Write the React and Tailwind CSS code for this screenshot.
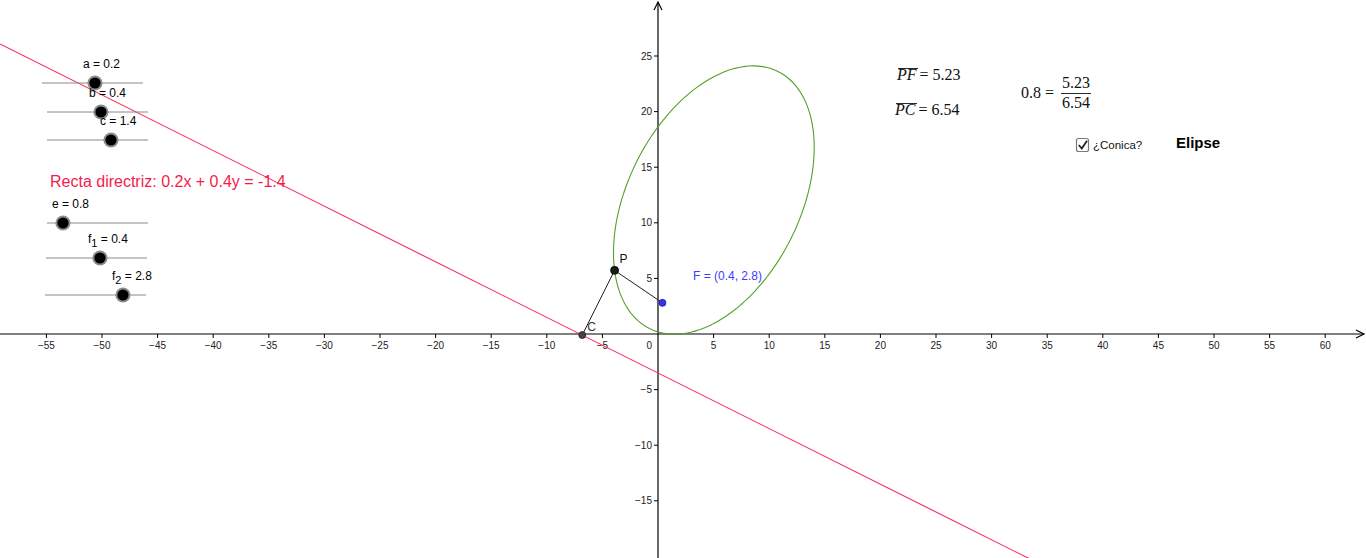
const S = 11.12;
const OX = 658;
const OY = 334;
const px = (x) => OX + x * S;
const py = (y) => OY - y * S;

// conica: foco F, directriz 0.2x + 0.4y + 1.4 = 0, excentricidad e
const e = 0.8;
const F = [0.4, 2.8];
const nLen = Math.sqrt(0.2 * 0.2 + 0.4 * 0.4);
const nHat = [0.2 / nLen, 0.4 / nLen];
const d0 = (0.2 * F[0] + 0.4 * F[1] + 1.4) / nLen;

function conicPoint(t) {
  const u = [Math.cos(t), Math.sin(t)];
  const r = (e * d0) / (1 - e * (u[0] * nHat[0] + u[1] * nHat[1]));
  return [F[0] + r * u[0], F[1] + r * u[1]];
}

function ellipsePath() {
  let d = "";
  for (let i = 0; i <= 360; i++) {
    const [x, y] = conicPoint((i / 360) * Math.PI * 2);
    d += (i === 0 ? "M" : "L") + px(x).toFixed(2) + " " + py(y).toFixed(2) + " ";
  }
  return d + "Z";
}

// P sobre la conica, C pie de la perpendicular en la directriz
const P = conicPoint(Math.atan2(2.96, -4.36));
const k = (0.2 * P[0] + 0.4 * P[1] + 1.4) / (0.2 * 0.2 + 0.4 * 0.4);
const C = [P[0] - k * 0.2, P[1] - k * 0.4];

const xTicks = [];
for (let v = -55; v <= 60; v += 5) if (v !== 0) xTicks.push(v);
const yTicks = [];
for (let v = -15; v <= 25; v += 5) if (v !== 0) yTicks.push(v);

const fmt = (v) => (v < 0 ? "\u2212" + Math.abs(v) : String(v));

const sliders = [
  { label: "a", sub: null, val: "0.2", lx: 83, ly: 68, x1: 42, y: 83, knob: 95 },
  { label: "b", sub: null, val: "0.4", lx: 89, ly: 97, x1: 47, y: 112, knob: 101 },
  { label: "c", sub: null, val: "1.4", lx: 100, ly: 125, x1: 47, y: 140, knob: 111 },
  { label: "e", sub: null, val: "0.8", lx: 52, ly: 208, x1: 47, y: 223, knob: 63 },
  { label: "f", sub: "1", val: "0.4", lx: 88, ly: 243, x1: 46, y: 258, knob: 100 },
  { label: "f", sub: "2", val: "2.8", lx: 112, ly: 280, x1: 45, y: 295, knob: 123 },
];

function Slider({ s }) {
  return (
    <g>
      <line x1={s.x1} y1={s.y} x2={s.x1 + 101} y2={s.y} stroke="#8a8a8a" strokeWidth="1" />
      <circle cx={s.knob} cy={s.y} r="7.6" fill="#8c8c8c" />
      <circle cx={s.knob} cy={s.y} r="5.6" fill="#000" />
      <text x={s.lx} y={s.ly} fontSize="12" fill="#000">
        {s.label}
        {s.sub && (
          <tspan dy="4" fontSize="11">
            {s.sub}
          </tspan>
        )}
        <tspan dy={s.sub ? -4 : 0}>{" = " + s.val}</tspan>
      </text>
    </g>
  );
}

export default function App() {
  return (
    <div className="w-full h-[558px] bg-white overflow-hidden">
      <svg
        width="1366"
        height="558"
        viewBox="0 0 1366 558"
        className="block font-['Liberation_Sans',Arial,sans-serif]"
      >
        {/* ejes */}
        <line x1="0" y1={OY} x2="1364" y2={OY} stroke="#000" strokeWidth="1.2" />
        <path d={`M1356 ${OY - 4} L1364 ${OY} L1356 ${OY + 4}`} fill="none" stroke="#000" strokeWidth="1.2" />
        <line x1={OX} y1="2" x2={OX} y2="558" stroke="#000" strokeWidth="1.2" />
        <path d={`M${OX - 4} 10 L${OX} 2 L${OX + 4} 10`} fill="none" stroke="#000" strokeWidth="1.2" />

        {xTicks.map((v) => (
          <g key={"x" + v}>
            <line x1={px(v)} y1={OY} x2={px(v)} y2={OY + 4} stroke="#000" strokeWidth="1" />
            <text x={px(v)} y={OY + 15} fontSize="10" textAnchor="middle" fill="#222">
              {fmt(v)}
            </text>
          </g>
        ))}
        {yTicks.map((v) => (
          <g key={"y" + v}>
            <line x1={OX - 4} y1={py(v)} x2={OX} y2={py(v)} stroke="#000" strokeWidth="1" />
            <text x={OX - 6} y={py(v) + 3.5} fontSize="10" textAnchor="end" fill="#222">
              {fmt(v)}
            </text>
          </g>
        ))}
        <text x={OX - 6} y={OY + 15} fontSize="10" textAnchor="end" fill="#222">
          0
        </text>

        {/* directriz */}
        <line x1="0" y1="44" x2="1040" y2="564" stroke="#ff2452" strokeWidth="1.1" />

        {/* conica */}
        <path d={ellipsePath()} fill="none" stroke="#55a02a" strokeWidth="1.1" />

        {/* segmentos */}
        <line x1={px(P[0])} y1={py(P[1])} x2={px(F[0])} y2={py(F[1])} stroke="#222" strokeWidth="1" />
        <line x1={px(P[0])} y1={py(P[1])} x2={px(C[0])} y2={py(C[1])} stroke="#222" strokeWidth="1" />

        {/* puntos */}
        <circle cx={px(C[0])} cy={py(C[1])} r="3.5" fill="#444" stroke="#222" strokeWidth="0.8" />
        <text x={px(C[0]) + 5} y={py(C[1]) - 4} fontSize="12" fill="#333">
          C
        </text>
        <circle cx={px(P[0])} cy={py(P[1])} r="4" fill="#1a1a1a" stroke="#000" strokeWidth="0.8" />
        <text x={px(P[0]) + 5} y={py(P[1]) - 7} fontSize="12" fill="#111">
          P
        </text>
        <circle cx={px(F[0])} cy={py(F[1])} r="3.5" fill="#3333ff" stroke="#1a1a8a" strokeWidth="0.8" />
        <text x="693" y="280" fontSize="12" fill="#3d3dff">
          F = (0.4, 2.8)
        </text>

        {/* deslizadores */}
        {sliders.map((s, i) => (
          <Slider key={i} s={s} />
        ))}

        <text x="50" y="187" fontSize="16" fill="#f51b4b">
          Recta directriz: 0.2x + 0.4y = -1.4
        </text>

        {/* formulas */}
        <g className="font-['Liberation_Serif','Times_New_Roman',serif]" fontSize="16" fill="#111">
          <line x1="898" y1="68.5" x2="918" y2="68.5" stroke="#111" strokeWidth="0.9" />
          <text x="897" y="80">
            <tspan fontStyle="italic">PF</tspan>
            <tspan dx="3">= 5.23</tspan>
          </text>
          <line x1="896" y1="103.5" x2="917" y2="103.5" stroke="#111" strokeWidth="0.9" />
          <text x="895" y="115">
            <tspan fontStyle="italic">PC</tspan>
            <tspan dx="3">= 6.54</tspan>
          </text>
          <text x="1021" y="98">0.8 =</text>
          <text x="1076" y="88" textAnchor="middle">
            5.23
          </text>
          <line x1="1061" y1="93.5" x2="1091" y2="93.5" stroke="#111" strokeWidth="0.9" />
          <text x="1076" y="108" textAnchor="middle">
            6.54
          </text>
        </g>

        {/* casilla */}
        <rect x="1076.5" y="138.5" width="12" height="13" rx="2" fill="#fff" stroke="#7a7a7a" strokeWidth="1.2" />
        <path d="M1078.8 145 L1081.8 148.5 L1087 140.8" fill="none" stroke="#222" strokeWidth="1.8" />
        <text x="1093" y="149" fontSize="11.5" fill="#111">
          ¿Conica?
        </text>
        <text x="1176" y="148" fontSize="15" fontWeight="bold" fill="#000">
          Elipse
        </text>
      </svg>
    </div>
  );
}
